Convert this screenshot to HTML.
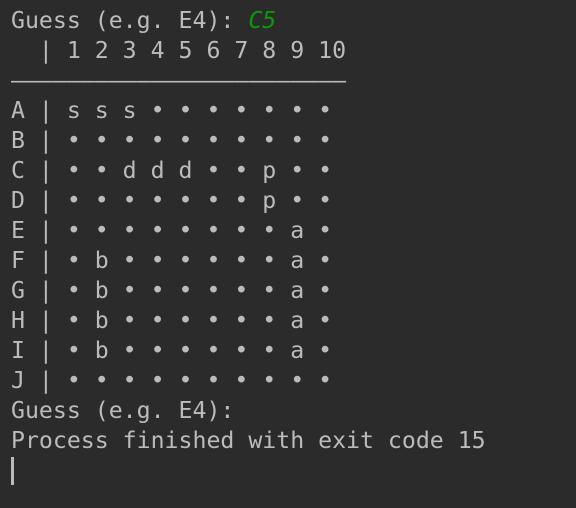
<!DOCTYPE html>
<html><head><meta charset="utf-8"><style>
html,body{margin:0;padding:0;background:#2b2b2b;width:576px;height:508px;overflow:hidden}
pre{margin:0;position:absolute;left:11px;top:6px;font-family:"DejaVu Sans Mono","Liberation Mono",monospace;font-size:23.2px;line-height:30px;color:#bbbbbb;letter-spacing:0}
.g{color:#0a9a0a;font-style:italic}
.cur{position:absolute;left:11px;top:457px;width:3px;height:28px;background:#bbbbbb}
</style></head><body>
<pre>Guess (e.g. E4): <span class="g">C5</span>
  | 1 2 3 4 5 6 7 8 9 10
————————————————————————
A | s s s • • • • • • •
B | • • • • • • • • • •
C | • • d d d • • p • •
D | • • • • • • • p • •
E | • • • • • • • • a •
F | • b • • • • • • a •
G | • b • • • • • • a •
H | • b • • • • • • a •
I | • b • • • • • • a •
J | • • • • • • • • • •
Guess (e.g. E4):
Process finished with exit code 15</pre>
<div class="cur"></div>
</body></html>
